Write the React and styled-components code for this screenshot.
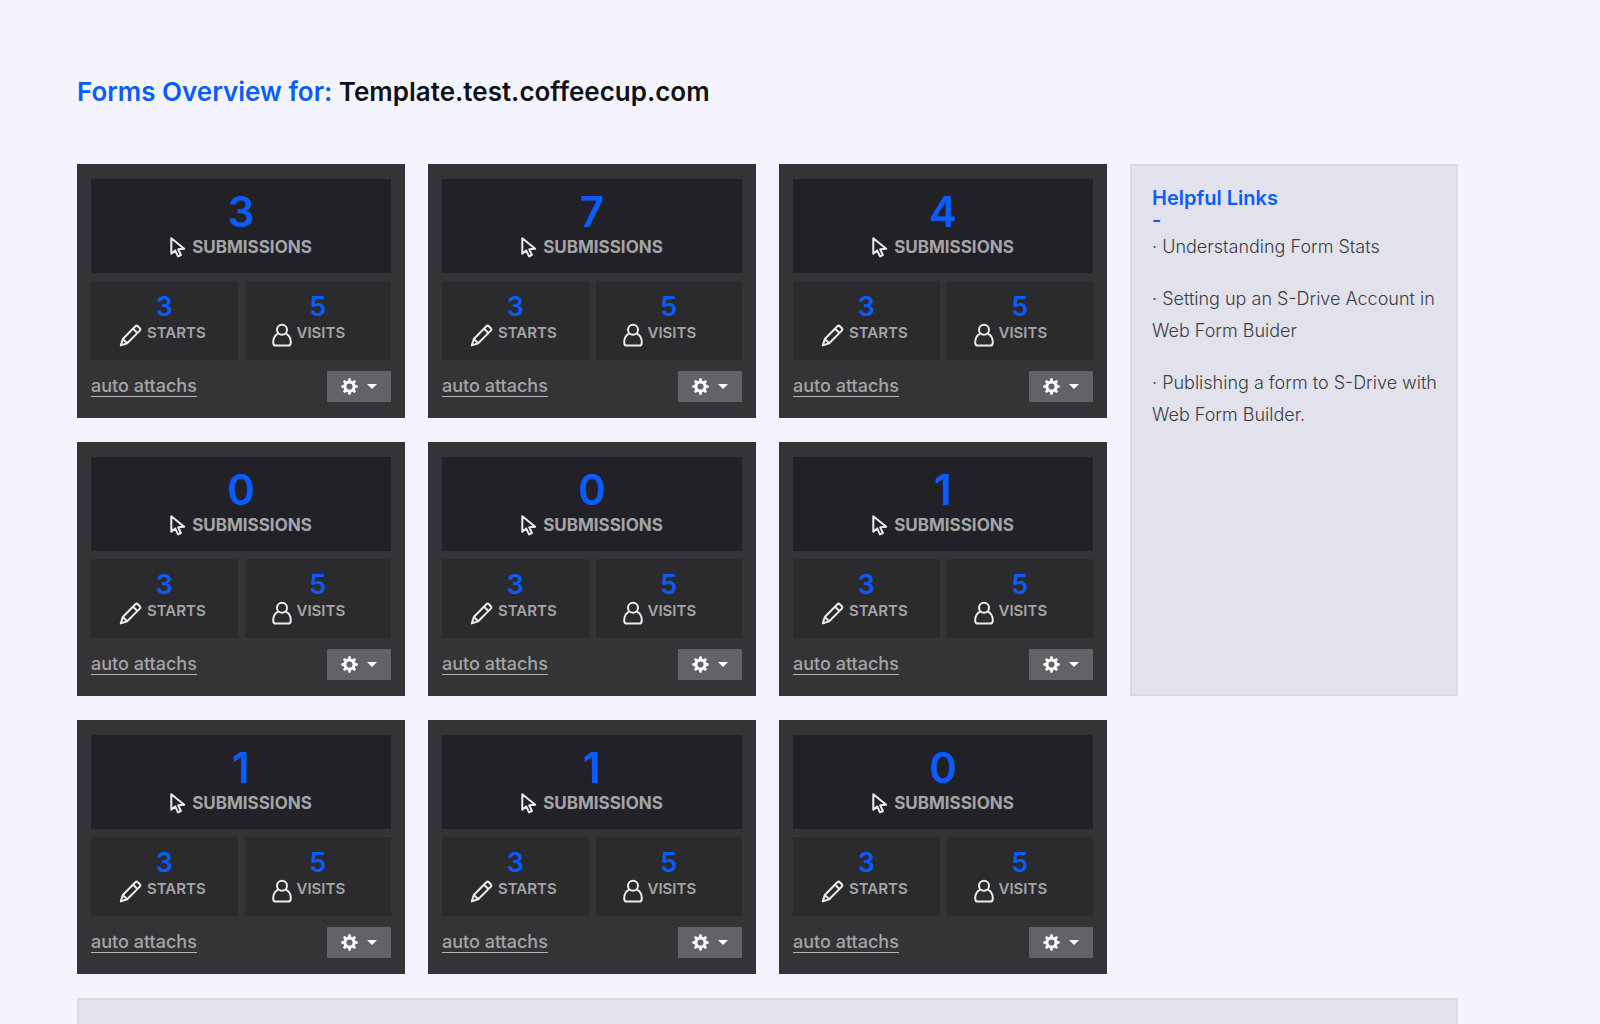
import React from 'react';
import styled, { createGlobalStyle } from 'styled-components';

const GlobalStyle = createGlobalStyle`
  * {
    box-sizing: border-box;
  }
  body {
    margin: 0;
    background-color: #f4f4ff;
    font-family: Inter, 'Liberation Sans', sans-serif;
    color: #0f1115;
  }
`;

const Page = styled.main`
  padding: 76px 142px 0 77px;
`;

const Title = styled.h1`
  margin: 0 0 56px;
  font-size: 26px;
  font-weight: 600;
  line-height: 32px;

  span {
    color: #0a5cff;
  }
`;

const Board = styled.div`
  display: grid;
  grid-template-columns: repeat(4, 1fr);
  gap: 24px 23px;
`;

const Card = styled.article`
  padding: 15px 14px 16px;
  background-color: #343436;
`;

const Stats = styled.div`
  display: grid;
  grid-template-columns: 1fr 1fr;
  gap: 8px 7px;
`;

const MainStat = styled.div`
  grid-column: span 2;
  height: 94px;
  padding-top: 12px;
  background-color: #222127;
`;

const SmallStat = styled.div`
  height: 79px;
  padding-top: 10px;
  background-color: #2b2b2d;
`;

const Count = styled.div`
  color: #0a5cff;
  font-size: ${(props) => (props.$big ? '42px' : '27px')};
  line-height: ${(props) => (props.$big ? '42px' : '32px')};
  font-weight: 600;
  text-align: center;
`;

const MainLabel = styled.div`
  display: flex;
  align-items: center;
  justify-content: center;
  gap: 6px;
  color: #a5a5a7;
  font-size: 17px;
  line-height: 28px;
  font-weight: 700;
`;

const SmallLabel = styled.div`
  display: flex;
  align-items: flex-start;
  gap: 5px;
  padding-left: 27px;
  color: #a5a5a7;
  font-size: 15px;
  line-height: 20px;
  font-weight: 600;
`;

const Icon = styled.svg`
  flex: none;
  fill: none;
  stroke: #ececee;
  stroke-width: 2;
  stroke-linejoin: round;
`;

const CardFooter = styled.footer`
  display: flex;
  align-items: center;
  justify-content: space-between;
  margin-top: 11px;
`;

const FormLink = styled.a`
  color: #a5a5a7;
  font-size: 18px;
  line-height: 20px;
  font-weight: 500;
  text-decoration: none;
  border-bottom: 1px solid #b4b4b6;
`;

const MenuButton = styled.button`
  display: flex;
  align-items: center;
  justify-content: center;
  gap: 9px;
  width: 64px;
  height: 31px;
  padding: 0;
  border: 0;
  border-radius: 1px;
  background-color: #636266;
  cursor: pointer;
`;

const Panel = styled.aside`
  background-color: #e2e2ec;
  border: 2px solid #dadae0;
`;

const LinksPanel = styled(Panel)`
  grid-column: 4;
  grid-row: 1 / span 2;
  padding: 21px 12px 0 20px;

  h2 {
    margin: 0;
    color: #0a5cff;
    font-size: 20px;
    line-height: 22px;
    font-weight: 600;
  }
  ul {
    display: grid;
    gap: 20px;
    margin: 0;
    padding: 0;
    list-style: none;
    font-size: 18px;
    line-height: 32px;
    font-weight: 300;
  }
  a {
    display: block;
    color: #3c3c42;
    text-decoration: none;
  }
`;

const WidePanel = styled(Panel)`
  grid-column: 1 / -1;
  height: 280px;
`;

const CursorIcon = () => (
  <Icon width="16" height="22" viewBox="0 0 16 22" aria-hidden="true">
    <path d="M1.3 2.2V17.8L5.2 14.4L8 20.4L10.9 19L8.2 13.3L14.2 12.8Z" />
  </Icon>
);

const PencilIcon = () => (
  <Icon width="24" height="24" viewBox="-1 0 24 24" aria-hidden="true">
    <path d="M1.8 22.4L3.8 16L16.4 3.2C17.2 2.4 18 2.4 18.8 3.2L20.8 5.2C21.6 6 21.6 6.8 20.8 7.6L8.2 20.2ZM14 5.6L18.4 10M3.8 16L8.2 20.2" />
  </Icon>
);

const PersonIcon = () => (
  <Icon width="20" height="24" viewBox="0 0 20 24" aria-hidden="true">
    <circle cx="10" cy="6.8" r="5" />
    <path d="M6.2 10.6C3 12 1.2 15.2 1.2 19.4C1.2 21.6 2 22.6 4 22.6H16C18 22.6 18.8 21.6 18.8 19.4C18.8 15.2 17 12 13.8 10.6" />
  </Icon>
);

const GearIcon = () => (
  <svg width="17" height="17" viewBox="-8.5 -8.5 17 17" aria-hidden="true">
    <circle r="4.6" fill="none" stroke="#fff" strokeWidth="3" />
    {[0, 45, 90, 135, 180, 225, 270, 315].map((angle) => (
      <path key={angle} d="M-1.7 -5.6L-1 -8.2H1L1.7 -5.6Z" fill="#fff" transform={`rotate(${angle})`} />
    ))}
  </svg>
);

const CaretIcon = () => (
  <svg width="10" height="5" viewBox="0 0 10 5" aria-hidden="true">
    <path d="M0 0H10L5 5Z" fill="#fff" />
  </svg>
);

const forms = [
  { id: 1, submissions: 3, starts: 3, visits: 5 },
  { id: 2, submissions: 7, starts: 3, visits: 5 },
  { id: 3, submissions: 4, starts: 3, visits: 5 },
  { id: 4, submissions: 0, starts: 3, visits: 5 },
  { id: 5, submissions: 0, starts: 3, visits: 5 },
  { id: 6, submissions: 1, starts: 3, visits: 5 },
  { id: 7, submissions: 1, starts: 3, visits: 5 },
  { id: 8, submissions: 1, starts: 3, visits: 5 },
  { id: 9, submissions: 0, starts: 3, visits: 5 },
];

const links = [
  'Understanding Form Stats',
  'Setting up an S-Drive Account in Web Form Buider',
  'Publishing a form to S-Drive with Web Form Builder.',
];

const FormCard = ({ form }) => (
  <Card>
    <Stats>
      <MainStat>
        <Count $big>{form.submissions}</Count>
        <MainLabel><CursorIcon />SUBMISSIONS</MainLabel>
      </MainStat>
      <SmallStat>
        <Count>{form.starts}</Count>
        <SmallLabel><PencilIcon />STARTS</SmallLabel>
      </SmallStat>
      <SmallStat>
        <Count>{form.visits}</Count>
        <SmallLabel><PersonIcon />VISITS</SmallLabel>
      </SmallStat>
    </Stats>
    <CardFooter>
      <FormLink href="#form">auto attachs</FormLink>
      <MenuButton type="button" aria-label="Form options">
        <GearIcon />
        <CaretIcon />
      </MenuButton>
    </CardFooter>
  </Card>
);

const App = () => (
  <>
    <GlobalStyle />
    <Page>
      <Title><span>Forms Overview for:</span> Template.test.coffeecup.com</Title>
      <Board>
        {forms.map((form) => (
          <FormCard key={form.id} form={form} />
        ))}
        <LinksPanel>
          <h2>Helpful Links<br />-</h2>
          <ul>
            {links.map((text) => (
              <li key={text}><a href="#help">· {text}</a></li>
            ))}
          </ul>
        </LinksPanel>
        <WidePanel as="section" />
      </Board>
    </Page>
  </>
);

export default App;
